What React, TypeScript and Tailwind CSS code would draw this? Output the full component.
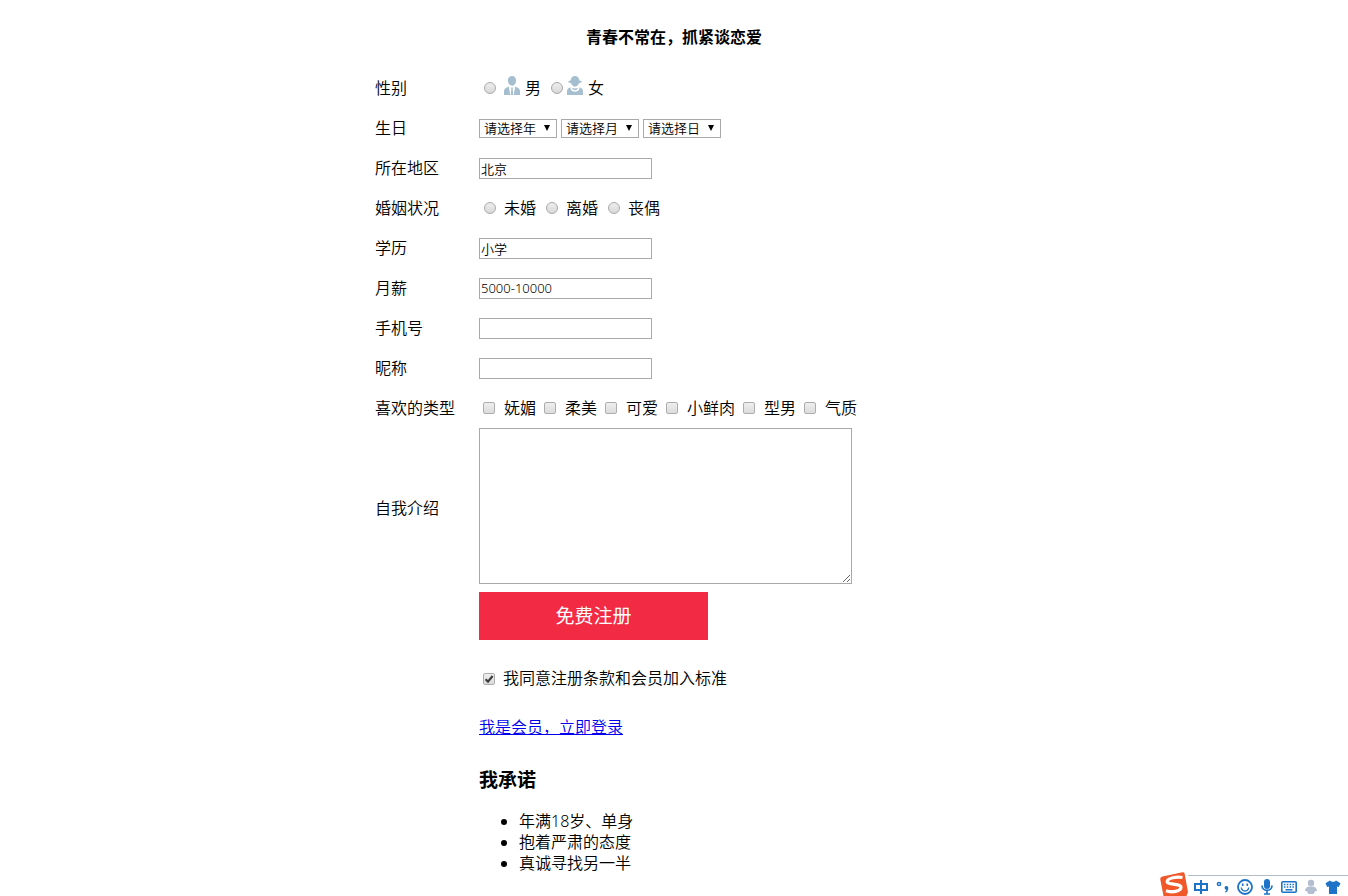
import React, { useId } from "react";

type RowProps = { label: string; htmlFor?: string; children: React.ReactNode };

function Row({ label, htmlFor, children }: RowProps) {
  const id = useId();
  return (
    <div
      className="grid min-h-10 grid-cols-[104px_1fr] items-center"
      role={htmlFor ? undefined : "group"}
      aria-labelledby={htmlFor ? undefined : id}
    >
      {htmlFor ? (
        <label htmlFor={htmlFor}>{label}</label>
      ) : (
        <span id={id}>{label}</span>
      )}
      <div className="flex items-center">{children}</div>
    </div>
  );
}

function Radio({ name, value }: { name: string; value: string }) {
  return (
    <input
      type="radio"
      name={name}
      value={value}
      className="size-3 shrink-0 appearance-none rounded-full border border-[#a9a9a9] bg-linear-to-b from-[#ededed] to-[#d9d9d9] checked:border-4 checked:border-[#666]"
    />
  );
}

function Checkbox({ name, checked }: { name: string; checked?: boolean }) {
  return (
    <span className="relative flex size-3 shrink-0">
      <input
        type="checkbox"
        name={name}
        defaultChecked={checked}
        className="peer size-3 appearance-none rounded-xs border border-[#adadad] bg-linear-to-b from-[#eeeeee] to-[#dcdcdc]"
      />
      <svg
        viewBox="0 0 12 12"
        className="pointer-events-none absolute inset-0 hidden size-3 peer-checked:block"
        aria-hidden="true"
      >
        <path d="M2.6 6.2 5 8.6 9.6 3" fill="none" stroke="#3c3c3c" strokeWidth="2.2" />
      </svg>
    </span>
  );
}

function Select({ label, text }: { label: string; text: string }) {
  return (
    <span className="relative flex">
      <select
        aria-label={label}
        className="h-[19px] w-[78px] appearance-none border border-[#a9a9a9] bg-white pl-1 text-[13px] leading-4"
      >
        <option>{text}</option>
      </select>
      <svg
        viewBox="0 0 6 6"
        className="pointer-events-none absolute top-1.5 right-[7px] size-1.5"
        aria-hidden="true"
      >
        <path d="M0 0h6L3 6z" fill="#000" />
      </svg>
    </span>
  );
}

function TextBox({ id, value }: { id: string; value?: string }) {
  return (
    <input
      id={id}
      type="text"
      defaultValue={value}
      className="h-[21px] w-[173px] border border-[#a9a9a9] bg-white px-px text-[13px] leading-4"
    />
  );
}

function ManIcon() {
  return (
    <svg viewBox="0 0 16 20" className="mb-1 h-5 w-4" fill="#a5bfd0" aria-hidden="true">
      <path d="M8 0C5.300 0 3.800 2 3.900 4.700 4 7.500 5.900 9.700 8 9.700s4-2.200 4.100-5C12.200 2 10.700 0 8 0z" />
      <path d="M4.800 10.400 1.800 12C.6 12.700 0 14 0 15.500V19h6.200zM11.200 10.400l3 1.600c1.200.7 1.800 2 1.800 3.500V19H9.800zM7 11.600h2l-.4 1.800L9.300 19H6.700l.7-5.600z" />
    </svg>
  );
}

function WomanIcon() {
  return (
    <svg viewBox="0 0 16 20" className="mb-1 h-5 w-4" fill="#a5bfd0" aria-hidden="true">
      <path d="M8 0C5.600 0 4 1.500 3.700 4.200L1 5.600c.1.9 1.400 1.300 2.900 1.500C4.400 9 6.100 10.700 8 10.700s3.600-1.700 4.100-3.600c1.500-.2 2.800-.6 2.900-1.500l-2.700-1.400C12 1.500 10.400 0 8 0z" />
      <path d="M3.600 11.200C1 11.900 0 13.300 0 15.500V19h16v-3.500c0-2.200-1-3.600-3.600-4.300.2.600.2 1.200 0 1.700C11.700 14.700 10 15.700 8 15.700s-3.700-1-4.400-2.800c-.2-.5-.2-1.100 0-1.700z" />
      <path d="M5 11.800c1.800.9 4.200.9 6 0-.3 1.500-1.500 2.500-3 2.500s-2.700-1-3-2.500z" />
    </svg>
  );
}

function InputMethodBar() {
  return (
    <div className="fixed right-0 bottom-0 flex h-6 items-end" aria-hidden="true">
      <svg viewBox="0 0 28 24" className="h-6 w-7">
        <path d="M2.500 4.500 22.500.2Q24.200 0 24.600 1.600L28 20 26.500 24H3.500L.3 7.500Q0 5 2.500 4.500z" fill="#f0582a" />
        <path
          d="M22.500 5.500C17 4.500 7.500 5.800 7.200 9.600 7 13 20.800 11 20.900 15.200 21 19.300 12 20.800 6 18.800"
          fill="none"
          stroke="#fff"
          strokeWidth="3.300"
        />
      </svg>
      <div className="flex h-[21px] items-center gap-1.5 border-t border-[#b4bcc4] bg-white pt-0.5 pr-[7px] pl-[5px]">
        <svg viewBox="0 0 16 16" className="size-4" fill="none" stroke="#1c73c8" strokeWidth="2">
          <path d="M2 5h12v6H2zM8 1v14" />
        </svg>
        <svg viewBox="0 0 16 16" className="size-4">
          <circle cx="4" cy="5" r="1.600" fill="none" stroke="#1c73c8" strokeWidth="1.500" />
          <path d="M10.500 7.200c1.800-.6 3.300.7 2.700 3-.4 1.700-1.500 3-2.900 3.400l-.4-.9c.9-.4 1.400-1 1.500-1.900-1.800-.1-2.500-2.900-.9-3.600z" fill="#1c73c8" />
        </svg>
        <svg viewBox="0 0 16 16" className="size-4" fill="none" stroke="#1c73c8" strokeWidth="1.800">
          <circle cx="8" cy="8" r="7" />
          <path d="M4.300 8.500c.5 4.600 6.900 4.600 7.400 0" strokeWidth="1.400" />
          <path d="M5.700 4.500v2.500M10.300 4.500v2.500" strokeWidth="1.600" />
        </svg>
        <svg viewBox="0 0 16 16" className="size-4">
          <rect x="5" y="0" width="6" height="10" rx="3" fill="#1c73c8" />
          <path d="M3 6.500c0 6.500 10 6.500 10 0M8 11v4M5 15h6" fill="none" stroke="#1c73c8" strokeWidth="1.700" />
        </svg>
        <svg viewBox="0 0 16 16" className="size-4">
          <rect x=".8" y="2.800" width="14.400" height="10.400" rx="1" fill="none" stroke="#1c73c8" strokeWidth="1.600" />
          <path d="M3 5.500h10M3 8h10" stroke="#1c73c8" strokeWidth="1.500" strokeDasharray="1.500 1.300" />
          <path d="M4.500 10.800h7" stroke="#1c73c8" strokeWidth="1.500" />
        </svg>
        <svg viewBox="0 0 16 16" className="size-4" fill="#b3bed1">
          <circle cx="8" cy="4" r="3.200" />
          <path d="M5.500 7.500h5c2 .7 3.500 2.300 3.500 4.500l-2.500.5c.4 1.300-.5 2.500-1.800 2.500H6.300c-1.300 0-2.200-1.200-1.800-2.500L2 12c0-2.200 1.500-3.800 3.500-4.500z" />
        </svg>
        <svg viewBox="0 0 16 16" className="size-4" fill="#1c73c8">
          <path d="M5 1.500c1 1.700 5 1.700 6 0l4.500 2.700-1.700 3.900-1.800-.7V15H4V7.400l-1.800.7L.5 4.200z" />
        </svg>
      </div>
    </div>
  );
}

const statuses = ["未婚", "离婚", "丧偶"];
const types = ["妩媚", "柔美", "可爱", "小鲜肉", "型男", "气质"];
const promises = ["年满18岁、单身", "抱着严肃的态度", "真诚寻找另一半"];

export default function App() {
  return (
    <main className="font-['Noto_Sans','Noto_Sans_CJK_SC',sans-serif] text-base leading-[21px] font-[350] text-black">
      <form className="mx-auto max-w-[598px] pt-[27px]" onSubmit={(e) => e.preventDefault()}>
        <h4 className="mb-5 text-center font-bold">青春不常在，抓紧谈恋爱</h4>

        <Row label="性别">
          <div className="flex items-center gap-2.5 pl-[5px]">
            <label className="flex items-center gap-2">
              <Radio name="sex" value="男" />
              <span className="flex items-center gap-[5px]">
                <ManIcon />
                男
              </span>
            </label>
            <label className="flex items-center gap-1">
              <Radio name="sex" value="女" />
              <span className="flex items-center gap-[5px]">
                <WomanIcon />
                女
              </span>
            </label>
          </div>
        </Row>
        <Row label="生日">
          <div className="flex gap-1">
            <Select label="年" text="请选择年" />
            <Select label="月" text="请选择月" />
            <Select label="日" text="请选择日" />
          </div>
        </Row>
        <Row label="所在地区" htmlFor="area">
          <TextBox id="area" value="北京" />
        </Row>
        <Row label="婚姻状况">
          <div className="flex gap-2.5 pl-[5px]">
            {statuses.map((s) => (
              <label key={s} className="flex items-center gap-2">
                <Radio name="marriage" value={s} />
                {s}
              </label>
            ))}
          </div>
        </Row>
        <Row label="学历" htmlFor="education">
          <TextBox id="education" value="小学" />
        </Row>
        <Row label="月薪" htmlFor="salary">
          <TextBox id="salary" value="5000-10000" />
        </Row>
        <Row label="手机号" htmlFor="phone">
          <TextBox id="phone" />
        </Row>
        <Row label="昵称" htmlFor="nickname">
          <TextBox id="nickname" />
        </Row>
        <Row label="喜欢的类型">
          <div className="flex gap-2 pl-1">
            {types.map((t) => (
              <label key={t} className="flex items-center gap-[9px]">
                <Checkbox name={t} />
                {t}
              </label>
            ))}
          </div>
        </Row>
        <Row label="自我介绍" htmlFor="intro">
          <textarea
            id="intro"
            className="mb-1 block h-[156px] w-[373px] resize border border-[#a9a9a9] bg-white p-0.5 text-[13px]"
          />
        </Row>

        <div className="pl-[104px]">
          <button
            type="submit"
            className="mt-1 block h-12 w-[229px] bg-[#f32a43] text-[19px] font-normal text-white"
          >
            免费注册
          </button>
          <label className="mt-7 flex items-center gap-2 pl-1">
            <Checkbox name="agree" checked />
            我同意注册条款和会员加入标准
          </label>
          <p className="mt-7">
            <a href="#login" className="text-[#0000ee] underline">
              我是会员，立即登录
            </a>
          </p>
          <h3 className="mt-8 text-[19px] font-bold">我承诺</h3>
          <ul className="mt-5 list-disc pl-10">
            {promises.map((p) => (
              <li key={p}>{p}</li>
            ))}
          </ul>
        </div>
      </form>
      <InputMethodBar />
    </main>
  );
}
